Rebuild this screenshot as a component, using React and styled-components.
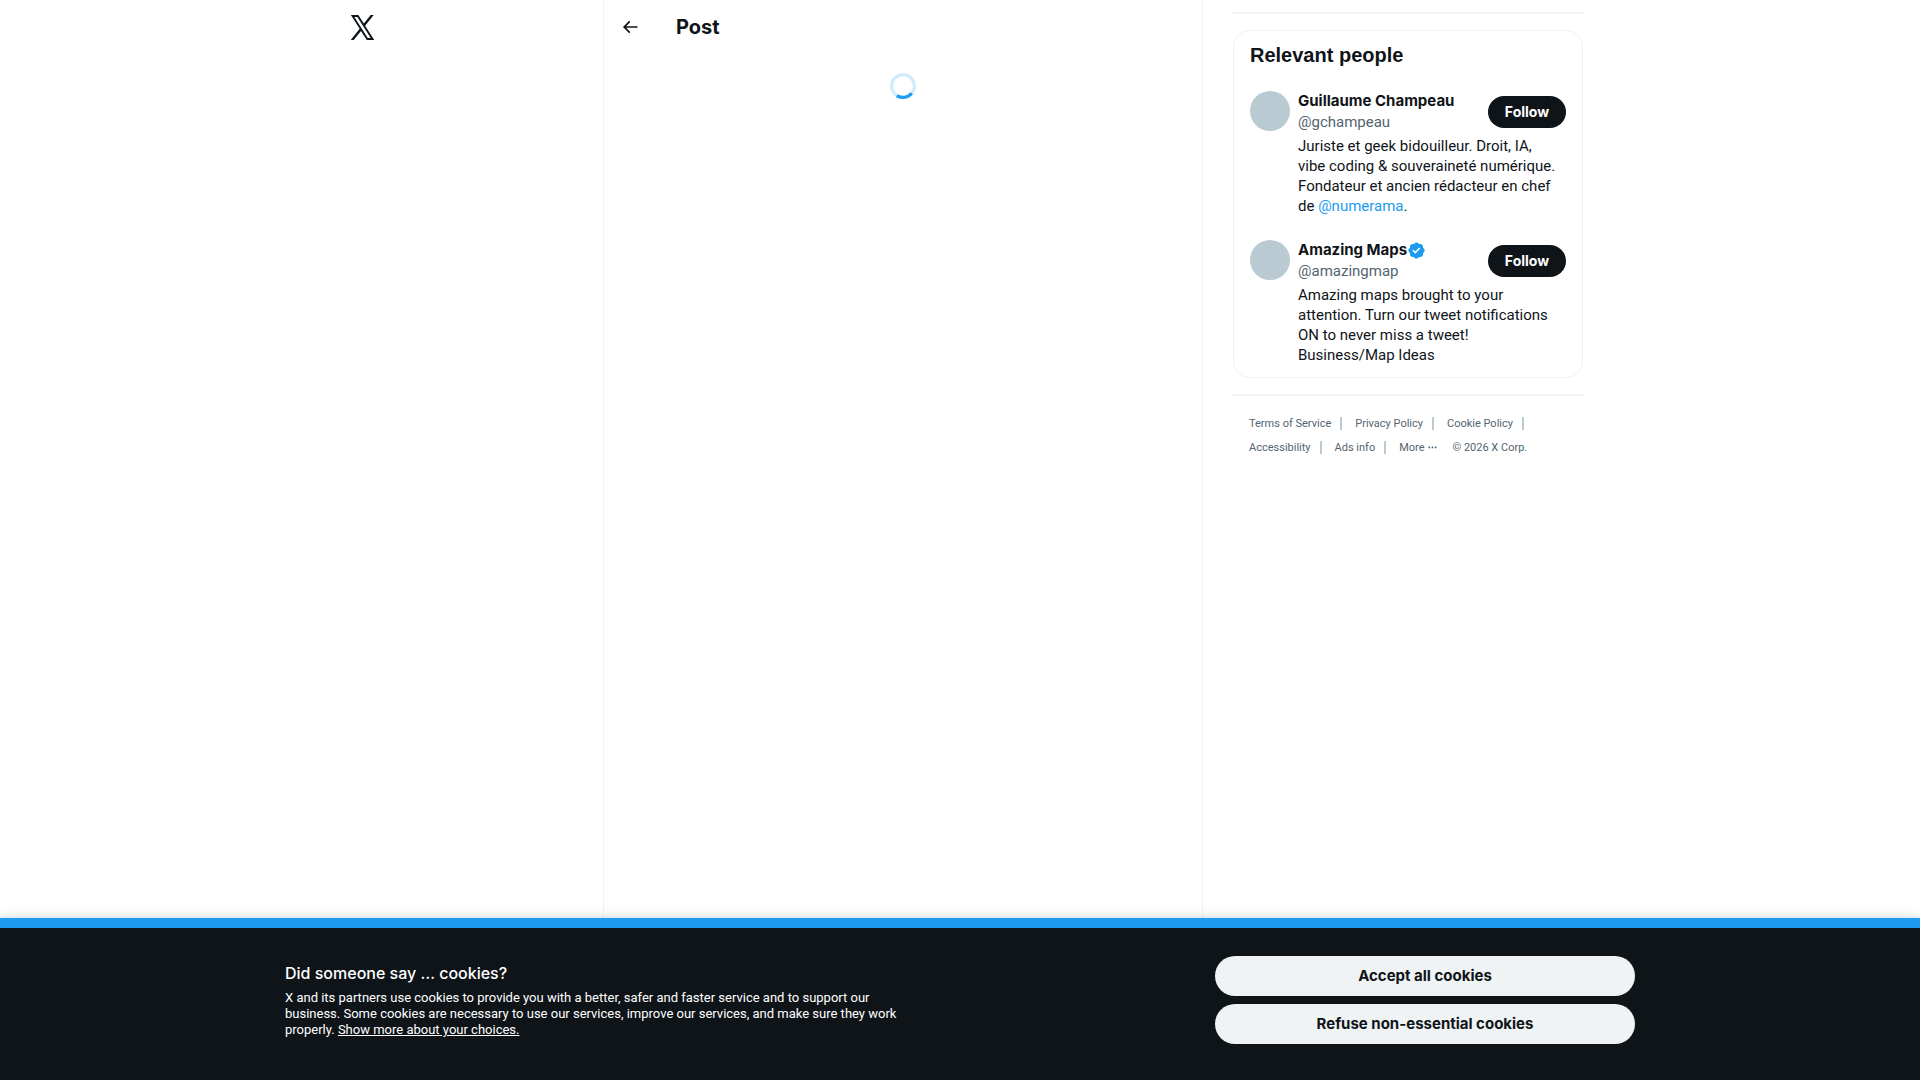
import styled, { createGlobalStyle } from 'styled-components';

const people = [
  {
    name: "Guillaume Champeau",
    handle: "@gchampeau",
    verified: false,
    bio: <>Juriste et geek bidouilleur. Droit, IA,<br />vibe coding & souveraineté numérique.<br />Fondateur et ancien rédacteur en chef<br />de <Mention href="#numerama">@numerama</Mention>.</>,
  },
  {
    name: "Amazing Maps",
    handle: "@amazingmap",
    verified: true,
    bio: <>Amazing maps brought to your<br />attention. Turn our tweet notifications<br />ON to never miss a tweet!<br />Business/Map Ideas</>,
  },
]

const footerRows = [
  ["Terms of Service", "Privacy Policy", "Cookie Policy"],
  ["Accessibility", "Ads info"],
]

function Mention({ href, children }) {
  return <MentionLink href={href}>{children}</MentionLink>
}

function XLogo() {
  return (
    <svg viewBox="0 0 24 24" width="29" height="31" preserveAspectRatio="none" fill="#0f1419" aria-hidden="true">
      <path d="M21.742 21.75l-7.563-11.179 7.056-8.321h-2.456l-5.691 6.714-4.54-6.714H2.359l7.29 10.776L2.25 21.75h2.456l6.035-7.118 4.818 7.118h6.191-.008zM7.739 3.818L18.81 20.182h-2.447L5.29 3.818h2.447z" />
    </svg>
  )
}

function BackArrow() {
  return (
    <svg viewBox="0 0 24 24" width="20" height="20" fill="#0f1419" aria-hidden="true">
      <path d="M7.414 13l5.043 5.04-1.414 1.42L3.586 12l7.457-7.46 1.414 1.42L7.414 11H21v2H7.414z" />
    </svg>
  )
}

function VerifiedBadge() {
  return (
    <svg viewBox="0 0 24 24" width="19" height="19" fill="#1d9bf0" role="img" aria-label="Verified account">
      <path d="M22.25 12c0-1.43-.88-2.67-2.19-3.34.46-1.39.2-2.9-.81-3.91s-2.52-1.27-3.91-.81c-.66-1.31-1.91-2.19-3.34-2.19s-2.67.88-3.33 2.19c-1.4-.46-2.91-.2-3.92.81s-1.26 2.52-.8 3.91c-1.31.67-2.2 1.91-2.2 3.34s.89 2.67 2.2 3.34c-.46 1.39-.21 2.9.8 3.91s2.52 1.26 3.91.81c.67 1.31 1.91 2.19 3.34 2.19s2.68-.88 3.34-2.19c1.39.45 2.9.2 3.91-.81s1.27-2.52.81-3.91c1.31-.67 2.19-1.91 2.19-3.34zm-11.71 4.2L6.8 12.46l1.41-1.42 2.26 2.26 4.8-5.23 1.47 1.36-6.2 6.77z" />
    </svg>
  )
}

function Spinner() {
  return (
    <svg viewBox="0 0 32 32" width="26" height="26" fill="none" stroke="#1d9bf0" strokeWidth="4" role="progressbar" aria-label="Loading">
      <circle cx="16" cy="16" r="14" opacity="0.2" />
      <circle cx="16" cy="16" r="14" strokeDasharray="20 68" transform="rotate(40 16 16)" />
    </svg>
  )
}

function App() {
  return (
    <Page>
      <GlobalStyle />
      <Content>
        <Nav>
          <a href="#home" aria-label="X"><XLogo /></a>
        </Nav>
        <Column>
          <ColumnHeader>
            <BackButton type="button" aria-label="Back"><BackArrow /></BackButton>
            <ColumnTitle>Post</ColumnTitle>
          </ColumnHeader>
          <Loading><Spinner /></Loading>
        </Column>
        <Sidebar>
          <Divider />
          <Card>
            <CardTitle>Relevant people</CardTitle>
            {people.map(person =>
              <Person key={person.handle}>
                <Avatar />
                <PersonBody>
                  <PersonTop>
                    <PersonNames>
                      <Name>{person.name}{person.verified && <VerifiedBadge />}</Name>
                      <Handle>{person.handle}</Handle>
                    </PersonNames>
                    <FollowButton type="button">Follow</FollowButton>
                  </PersonTop>
                  <Bio>{person.bio}</Bio>
                </PersonBody>
              </Person>
            )}
          </Card>
          <Divider />
          <Footer>
            {footerRows.map((row, i) =>
              <FooterRow key={i}>
                {row.map(label => <FooterLink key={label} href="#legal">{label}</FooterLink>)}
                {i === 1 &&
                  <>
                    <MoreButton type="button">
                      More
                      <svg viewBox="0 0 24 24" width="11" height="11" fill="#536471" aria-hidden="true">
                        <path d="M3 12c0-1.1.9-2 2-2s2 .9 2 2-.9 2-2 2-2-.9-2-2zm9 2c1.1 0 2-.9 2-2s-.9-2-2-2-2 .9-2 2 .9 2 2 2zm7 0c1.1 0 2-.9 2-2s-.9-2-2-2-2 .9-2 2 .9 2 2 2z" />
                      </svg>
                    </MoreButton>
                    <span>© 2026 X Corp.</span>
                  </>
                }
              </FooterRow>
            )}
          </Footer>
        </Sidebar>
      </Content>
      <CookieBar>
        <CookieInner>
          <CookieText>
            <CookieTitle>Did someone say … cookies?</CookieTitle>
            <CookieCopy>
              X and its partners use cookies to provide you with a better, safer and faster service and to support our<br />
              business. Some cookies are necessary to use our services, improve our services, and make sure they work<br />
              properly. <a href="#choices">Show more about your choices.</a>
            </CookieCopy>
          </CookieText>
          <CookieActions>
            <CookieButton type="button">Accept all cookies</CookieButton>
            <CookieButton type="button">Refuse non-essential cookies</CookieButton>
          </CookieActions>
        </CookieInner>
      </CookieBar>
    </Page>
  );
}

const GlobalStyle = createGlobalStyle`
  * {
    box-sizing: border-box;
  }
  body {
    margin: 0;
    background: #fff;
    color: #0f1419;
    font-family: Roboto, "Liberation Sans", sans-serif;
    font-size: 15px;
    line-height: 20px;
  }
  button {
    border: 0;
    padding: 0;
    font-family: Inter, "Liberation Sans", sans-serif;
    cursor: pointer;
  }
  svg {
    display: block;
  }
`
const Page = styled.div`
  display: flex;
  flex-direction: column;
  min-height: 100vh;
`
const Content = styled.div`
  flex: 1;
  display: grid;
  grid-template-columns: 267px minmax(0, 600px) 380px;
  width: 100%;
  max-width: 1248px;
  margin: 0 auto;
`
const Nav = styled.header`
  padding: 12px;
  a {
    display: inline-block;
  }
`
const Column = styled.main`
  border-left: 1px solid #eff3f4;
  border-right: 1px solid #eff3f4;
`
const ColumnHeader = styled.div`
  display: flex;
  align-items: center;
  gap: 28px;
  height: 53px;
  padding: 0 8px;
`
const BackButton = styled.button`
  display: flex;
  align-items: center;
  justify-content: center;
  width: 36px;
  height: 36px;
  border-radius: 18px;
  background: transparent;
`
const ColumnTitle = styled.h2`
  margin: 0;
  font-family: Inter, "Liberation Sans", sans-serif;
  font-size: 20px;
  line-height: 24px;
`
const Loading = styled.div`
  display: flex;
  justify-content: center;
  padding: 20px;
`
const Sidebar = styled.aside`
  padding: 12px 0 0 30px;
`
const Divider = styled.hr`
  margin: 0;
  border: 0;
  border-top: 2px solid #eff3f4;
`
const Card = styled.section`
  margin: 16px 0;
  border: 1px solid #eff3f4;
  border-radius: 16px;
`
const CardTitle = styled.h2`
  margin: 0;
  padding: 12px 16px;
  font-family: "Liberation Sans", sans-serif;
  font-size: 20px;
  line-height: 24px;
`
const Person = styled.div`
  display: flex;
  gap: 8px;
  padding: 12px 16px;
`
const Avatar = styled.div`
  flex: none;
  width: 40px;
  height: 40px;
  border-radius: 50%;
  background: #b9cad3;
`
const PersonBody = styled.div`
  flex: 1;
  min-width: 0;
`
const PersonTop = styled.div`
  display: flex;
  align-items: center;
  justify-content: space-between;
`
const PersonNames = styled.div`
  display: flex;
  flex-direction: column;
  gap: 1px;
`
const Name = styled.div`
  display: flex;
  align-items: center;
  height: 20px;
  font-family: Inter, "Liberation Sans", sans-serif;
  font-weight: 700;
`
const Handle = styled.div`
  color: #536471;
`
const FollowButton = styled.button`
  height: 32px;
  width: 78px;
  border-radius: 16px;
  background: #0f1419;
  color: #fff;
  font-size: 14px;
  font-weight: 700;
`
const Bio = styled.div`
  padding-top: 4px;
  white-space: nowrap;
`
const MentionLink = styled.a`
  color: #1d9bf0;
  text-decoration: none;
`
const Footer = styled.footer`
  padding: 15px 16px;
  color: #536471;
  font-size: 11px;
  line-height: 13px;
`
const FooterRow = styled.div`
  display: flex;
  align-items: center;
  height: 24px;
`
const FooterLink = styled.a`
  display: flex;
  align-items: center;
  color: #536471;
  text-decoration: none;
  &::after {
    content: '';
    width: 2px;
    height: 13px;
    margin: 0 13px 0 9px;
    background: #b9cad3;
  }
`
const MoreButton = styled.button`
  display: flex;
  align-items: center;
  gap: 2px;
  margin-right: 15px;
  background: transparent;
  color: #536471;
  font-family: Roboto, "Liberation Sans", sans-serif;
  font-size: 11px;
  line-height: 13px;
`
const CookieBar = styled.div`
  border-top: 10px solid #1d9bf0;
  background: #0f1419;
  color: #fff;
  box-shadow: 0 0 15px rgba(101, 119, 134, 0.2), 0 0 3px 1px rgba(101, 119, 134, 0.15);
`
const CookieInner = styled.div`
  display: flex;
  align-items: center;
  justify-content: space-between;
  gap: 40px;
  max-width: 1350px;
  margin: 0 auto;
  padding: 28px 0 36px;
`
const CookieText = styled.div`
  display: flex;
  flex-direction: column;
  gap: 6px;
`
const CookieTitle = styled.h2`
  margin: 0;
  font-family: Inter, "Liberation Sans", sans-serif;
  font-size: 16px;
  font-weight: 500;
  line-height: 22px;
`
const CookieCopy = styled.p`
  margin: 0;
  font-size: 13px;
  line-height: 16px;
  a {
    color: #fff;
  }
`
const CookieActions = styled.div`
  display: flex;
  flex-direction: column;
  gap: 8px;
  width: 420px;
`
const CookieButton = styled.button`
  height: 40px;
  padding-bottom: 2px;
  border-radius: 20px;
  background: #eff3f4;
  color: #0f1419;
  font-size: 15px;
  font-weight: 700;
`

export default App;
